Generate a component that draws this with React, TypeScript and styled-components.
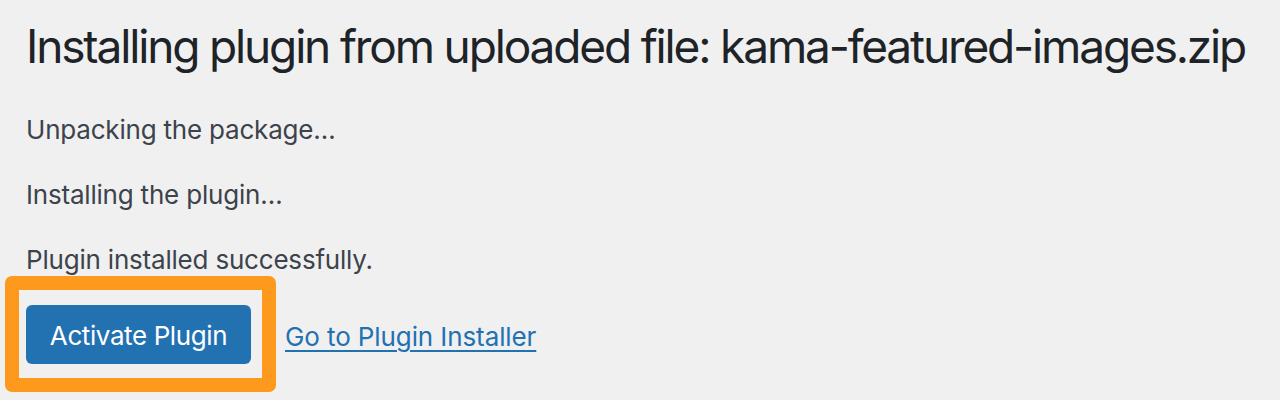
import React from "react";
import styled, { createGlobalStyle } from "styled-components";

const GlobalStyle = createGlobalStyle`
  html, body {
    margin: 0;
    padding: 0;
    background: #f0f0f1;
  }
  body {
    font-family: Inter, "Noto Sans", "Liberation Sans", sans-serif;
    -webkit-font-smoothing: antialiased;
  }
`;

const Wrap = styled.div`
  padding: 17px 0 0 26px;
  width: 1280px;
  height: 400px;
  box-sizing: border-box;
  overflow: hidden;
`;

const Title = styled.h1`
  margin: 0 0 33px 0;
  font-size: 46px;
  line-height: 1.3;
  font-weight: 400;
  letter-spacing: -2.15px;
  color: #1d2327;
  white-space: nowrap;
`;

const Message = styled.p`
  margin: 0 0 26px 0;
  font-size: 26px;
  line-height: 39px;
  letter-spacing: -0.2px;
  color: #3c434a;
`;

const Actions = styled.div`
  display: flex;
  align-items: center;
  gap: 34px;
`;

const Highlight = styled.div`
  position: relative;
  display: inline-flex;
`;

const HighlightFrame = styled.span`
  position: absolute;
  left: -21px;
  top: -29px;
  right: -25px;
  bottom: -28px;
  border: 14px solid #fd991d;
  border-radius: 7px;
  pointer-events: none;
`;

const PrimaryButton = styled.button`
  width: 225px;
  height: 59px;
  border: none;
  border-radius: 6px;
  background: #2271b1;
  color: #ffffff;
  font-family: inherit;
  font-size: 26px;
  line-height: 1;
  letter-spacing: -0.4px;
  white-space: nowrap;
  padding: 3px 0 0 0;
  cursor: pointer;
`;

const TextLink = styled.a`
  font-size: 26px;
  color: #2271b1;
  letter-spacing: -0.1px;
  text-decoration: underline;
  text-decoration-thickness: 2px;
  text-underline-offset: 4px;
  margin-top: 4px;
`;

export default function App() {
  return (
    <>
      <GlobalStyle />
      <Wrap>
        <Title>Installing plugin from uploaded file: kama-featured-images.zip</Title>
        <Message>Unpacking the package…</Message>
        <Message>Installing the plugin…</Message>
        <Message>Plugin installed successfully.</Message>
        <Actions>
          <Highlight>
            <PrimaryButton type="button">Activate Plugin</PrimaryButton>
            <HighlightFrame />
          </Highlight>
          <TextLink href="#">Go to Plugin Installer</TextLink>
        </Actions>
      </Wrap>
    </>
  );
}
